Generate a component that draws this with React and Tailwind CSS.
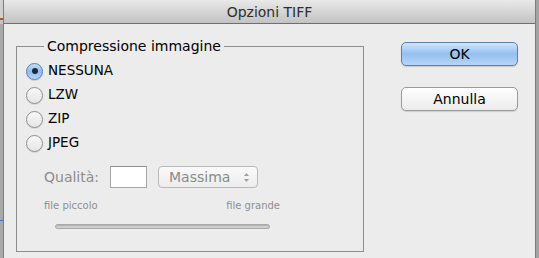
import React from "react";

function Radio({ checked, label }) {
  return (
    <div className="h-[24px] flex items-center">
      {checked ? (
        <div className="w-[17px] h-[17px] rounded-full border border-[#5a7fb5] bg-gradient-to-b from-[#c9def6] via-[#8fbbec] to-[#b8d6f5] flex items-center justify-center shadow-[0_1px_1px_rgba(0,0,0,0.15)]">
          <div className="w-[6px] h-[6px] rounded-full bg-[#1b2a3a]" />
        </div>
      ) : (
        <div className="w-[17px] h-[17px] rounded-full border border-[#8e8e8e] bg-gradient-to-b from-[#f8f8f8] to-[#e6e6e6] shadow-[0_1px_1px_rgba(0,0,0,0.1)]" />
      )}
      <span className="ml-[5px] text-[13.5px] text-black leading-none">{label}</span>
    </div>
  );
}

export default function App() {
  return (
    <div className="w-[539px] h-[258px] flex bg-[#a9a9a9] font-['DejaVu_Sans',sans-serif] overflow-hidden">
      <div className="w-[3px] flex flex-col">
        <div className="h-[18px] bg-[#d0d0d0]" />
        <div className="h-[2px] bg-[#b5532a]" />
        <div className="h-[4px] bg-[#c4c4c4]" />
        <div className="h-[196px]" />
        <div className="h-[1px] bg-[#3b78d0]" />
      </div>
      <div className="w-[533px] flex flex-col border-x border-[#7d7d7d]">
        <div className="h-[24px] shrink-0 bg-gradient-to-b from-[#e9e9e9] to-[#c3c3c3] border-b border-[#6f6f6f] flex items-center justify-center">
          <span className="text-[14px] text-[#2e2e2e] leading-none">Opzioni TIFF</span>
        </div>
        <div className="flex-1 bg-[#ececec] flex">
          <fieldset className="ml-[12px] mt-[14px] w-[348px] h-[214px] border border-[#8d8d8d] pl-[9px]">
            <legend className="ml-[18px] px-[3px] text-[14px] text-black leading-[17px]">
              Compressione immagine
            </legend>
            <div className="mt-[4px] flex flex-col">
              <Radio checked label="NESSUNA" />
              <Radio label="LZW" />
              <Radio label="ZIP" />
              <Radio label="JPEG" />
            </div>
            <div className="ml-[18px] mt-[11px] flex items-center">
              <span className="text-[14px] text-[#8c8c8c] leading-none w-[66px]">Qualità:</span>
              <div className="w-[37px] h-[22px] bg-white border border-[#a6a6a6] border-t-[#8f8f8f]" />
              <div className="ml-[11px] w-[100px] h-[22px] rounded-[4px] border border-[#b9b9b9] bg-gradient-to-b from-[#fafafa] to-[#ececec] flex items-center pl-[10px] pr-[7px]">
                <span className="text-[14px] text-[#8a8a8a] leading-none flex-1">Massima</span>
                <svg width="7" height="11" viewBox="0 0 7 11">
                  <path d="M3.5 1 L6 4 L1 4 Z" fill="#a0a0a0" />
                  <path d="M3.5 10 L6 7 L1 7 Z" fill="#a0a0a0" />
                </svg>
              </div>
            </div>
            <div className="ml-[18px] mt-[13px] w-[236px] flex justify-between text-[10px] text-[#8f8f8f] leading-none">
              <span>file piccolo</span>
              <span>file grande</span>
            </div>
            <div className="ml-[29px] mt-[13px] w-[215px] h-[5px] rounded-full bg-[#d0d0d0] border border-[#a9a9a9] shadow-[inset_0_1px_1px_rgba(0,0,0,0.15)]" />
          </fieldset>
          <div className="ml-[37px] mt-[18px] flex flex-col">
            <button className="w-[117px] h-[24px] rounded-[5px] border border-[#5b7fb3] bg-gradient-to-b from-[#d3e5fa] via-[#93c0f0] to-[#b6d6f7] text-[14px] text-black leading-none flex items-center justify-center shadow-[0_1px_1px_rgba(0,0,0,0.15)]">
              OK
            </button>
            <button className="mt-[21px] w-[117px] h-[24px] rounded-[5px] border border-[#9a9a9a] bg-gradient-to-b from-[#ffffff] to-[#ebebeb] text-[14px] text-black leading-none flex items-center justify-center shadow-[0_1px_1px_rgba(0,0,0,0.12)]">
              Annulla
            </button>
          </div>
        </div>
      </div>
      <div className="w-[3px] bg-[#a3a3a3]" />
    </div>
  );
}
